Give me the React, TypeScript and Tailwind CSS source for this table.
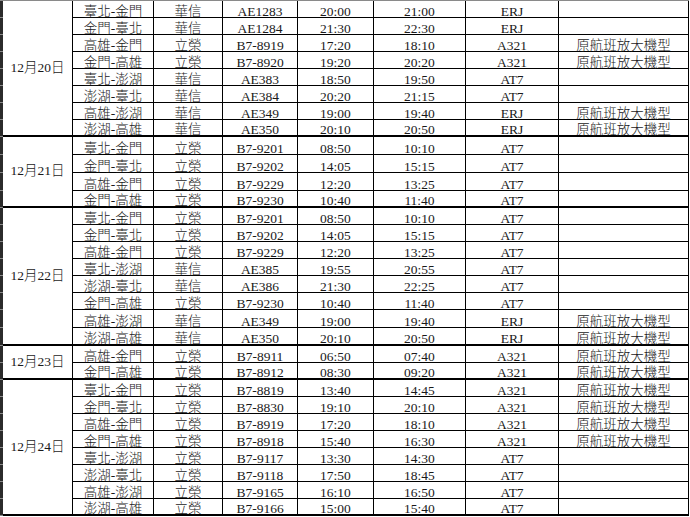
import React from "react";

type Row = [string, string, string, string, string, string, string];
type Group = { date: string; hs: number[]; rows: Row[] };

const N = "原航班放大機型";

const groups: Group[] = [
  {
    date: "12月20日",
    hs: [17, 17, 17, 17, 17, 17, 17, 15],
    rows: [
      ["臺北-金門", "華信", "AE1283", "20:00", "21:00", "ERJ", ""],
      ["金門-臺北", "華信", "AE1284", "21:30", "22:30", "ERJ", ""],
      ["高雄-金門", "立榮", "B7-8919", "17:20", "18:10", "A321", N],
      ["金門-高雄", "立榮", "B7-8920", "19:20", "20:20", "A321", N],
      ["臺北-澎湖", "華信", "AE383", "18:50", "19:50", "AT7", ""],
      ["澎湖-臺北", "華信", "AE384", "20:20", "21:15", "AT7", ""],
      ["高雄-澎湖", "華信", "AE349", "19:00", "19:40", "ERJ", N],
      ["澎湖-高雄", "華信", "AE350", "20:10", "20:50", "ERJ", N],
    ],
  },
  {
    date: "12月21日",
    hs: [18, 18, 18, 15],
    rows: [
      ["臺北-金門", "立榮", "B7-9201", "08:50", "10:10", "AT7", ""],
      ["金門-臺北", "立榮", "B7-9202", "14:05", "15:15", "AT7", ""],
      ["高雄-金門", "立榮", "B7-9229", "12:20", "13:25", "AT7", ""],
      ["金門-高雄", "立榮", "B7-9230", "10:40", "11:40", "AT7", ""],
    ],
  },
  {
    date: "12月22日",
    hs: [17, 17, 17, 17, 17, 17, 18, 16],
    rows: [
      ["臺北-金門", "立榮", "B7-9201", "08:50", "10:10", "AT7", ""],
      ["金門-臺北", "立榮", "B7-9202", "14:05", "15:15", "AT7", ""],
      ["高雄-金門", "立榮", "B7-9229", "12:20", "13:25", "AT7", ""],
      ["臺北-澎湖", "華信", "AE385", "19:55", "20:55", "AT7", ""],
      ["澎湖-臺北", "華信", "AE386", "21:30", "22:25", "AT7", ""],
      ["金門-高雄", "立榮", "B7-9230", "10:40", "11:40", "AT7", ""],
      ["高雄-澎湖", "華信", "AE349", "19:00", "19:40", "ERJ", N],
      ["澎湖-高雄", "華信", "AE350", "20:10", "20:50", "ERJ", N],
    ],
  },
  {
    date: "12月23日",
    hs: [17, 15],
    rows: [
      ["高雄-金門", "立榮", "B7-8911", "06:50", "07:40", "A321", N],
      ["金門-高雄", "立榮", "B7-8912", "08:30", "09:20", "A321", N],
    ],
  },
  {
    date: "12月24日",
    hs: [17, 17, 17, 17, 17, 17, 17, 15],
    rows: [
      ["臺北-金門", "立榮", "B7-8819", "13:40", "14:45", "A321", N],
      ["金門-臺北", "立榮", "B7-8830", "19:10", "20:10", "A321", N],
      ["高雄-金門", "立榮", "B7-8919", "17:20", "18:10", "A321", N],
      ["金門-高雄", "立榮", "B7-8918", "15:40", "16:30", "A321", N],
      ["臺北-澎湖", "立榮", "B7-9117", "13:30", "14:30", "AT7", ""],
      ["澎湖-臺北", "立榮", "B7-9118", "17:50", "18:45", "AT7", ""],
      ["高雄-澎湖", "立榮", "B7-9165", "16:10", "16:50", "AT7", ""],
      ["澎湖-高雄", "立榮", "B7-9166", "15:00", "15:40", "AT7", ""],
    ],
  },
];

const H: Record<number, string> = {
  15: "h-[15px]",
  16: "h-[16px]",
  17: "h-[17px]",
  18: "h-[18px]",
};

const colW = [
  "w-[81px]",
  "w-[69px]",
  "w-[75px]",
  "w-[76px]",
  "w-[92px]",
  "w-[93px]",
  "w-[130px]",
];

function Cell({ text, w }: { text: string; w: string }) {
  return (
    <div
      className={`${w} shrink-0 h-full border-r border-black flex items-end justify-center leading-[10px] whitespace-nowrap`}
    >
      <span>{text}</span>
    </div>
  );
}

export default function App() {
  return (
    <div className="w-[690px] h-[517px] bg-white overflow-hidden flex font-['Liberation_Serif','Noto_Sans_CJK_TC',serif] font-light text-[13.5px] text-[#1a1a1a]">
      {/* left window edge strip */}
      <div className="w-[3px] shrink-0 flex flex-col">
        <div className="h-[1px] bg-[#8a8a8a]" />
        {groups.map((g, gi) =>
          g.hs.map((h, i) => (
            <div
              key={`${gi}-${i}`}
              className={`${H[i === g.hs.length - 1 ? h + 2 : h]} bg-[#2b2b2b] border-b border-[#8a8a8a]`}
            />
          ))
        )}
      </div>
      {/* table */}
      <div className="w-[686px] shrink-0 flex flex-col border-t border-[#8a8a8a]">
        {groups.map((g, gi) => (
          <div key={gi} className="flex border-b-2 border-black">
            <div className="w-[70px] shrink-0 border-r border-black flex items-center justify-center whitespace-nowrap">
              {g.date}
            </div>
            <div className="flex flex-col">
              {g.rows.map((r, ri) => (
                <div
                  key={ri}
                  className={`${H[g.hs[ri]]} flex ${ri === g.rows.length - 1 ? "" : "border-b border-black"}`}
                >
                  {r.map((t, ci) => (
                    <Cell key={ci} text={t} w={colW[ci]} />
                  ))}
                </div>
              ))}
            </div>
          </div>
        ))}
      </div>
    </div>
  );
}
